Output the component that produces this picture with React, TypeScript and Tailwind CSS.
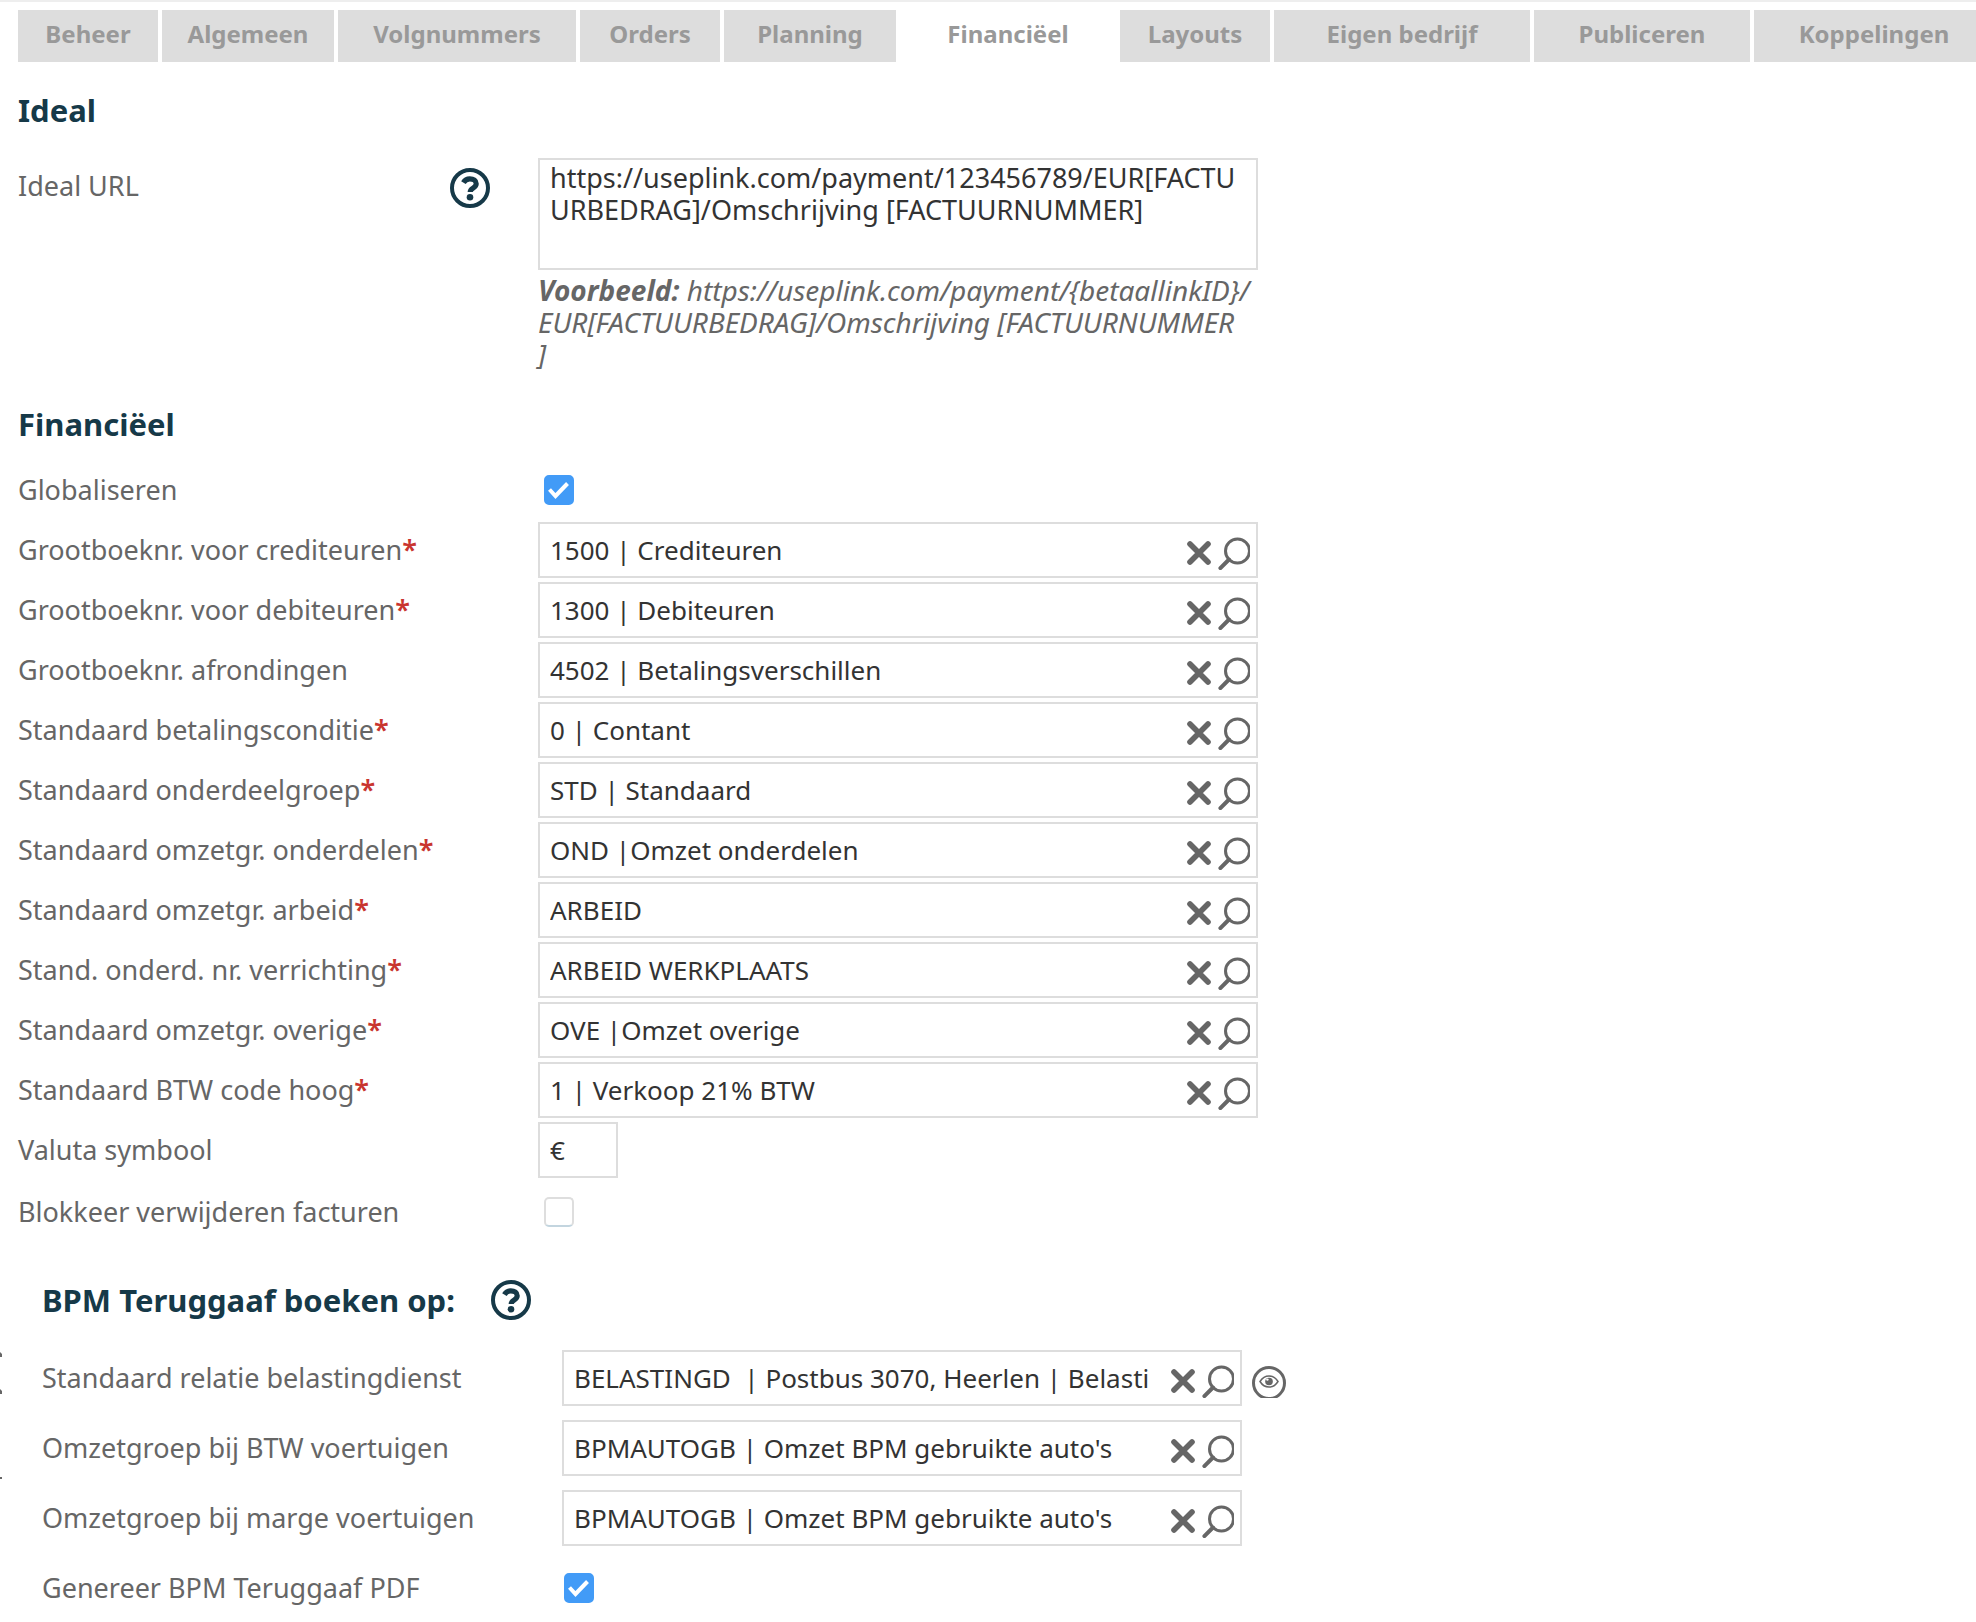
import { useId, useState, type ReactNode } from 'react';

function HelpIcon() {
  return (
    <svg viewBox="0 0 40 40" className="size-10" fill="none" stroke="currentColor" aria-hidden="true">
      <circle cx="20" cy="20" r="18" strokeWidth="4" />
      <path d="M13.4 14.6c1.5-2.6 3.6-3.8 6.4-3.8 3.8 0 6.4 1.9 6.4 4.9 0 4.6-6 4.2-6 8.3" strokeWidth="5.2" />
      <circle cx="20" cy="29.2" r="3.3" fill="currentColor" stroke="none" />
    </svg>
  );
}

function ClearIcon() {
  return (
    <svg viewBox="0 0 24 24" className="size-6" fill="none" stroke="currentColor" aria-hidden="true">
      <path d="M3 3l18 18M21 3L3 21" strokeWidth="5.6" strokeLinecap="round" />
    </svg>
  );
}

function SearchIcon() {
  return (
    <svg viewBox="0 0 32 33" className="h-[33px] w-8" fill="none" stroke="currentColor" aria-hidden="true">
      <circle cx="19.5" cy="14" r="12" strokeWidth="3" />
      <path d="M11 22.5l-8.6 8.6" strokeWidth="4" strokeLinecap="round" />
    </svg>
  );
}

function EyeIcon() {
  return (
    <svg viewBox="0 0 34 32" className="h-8 w-[34px]" fill="none" stroke="currentColor" aria-hidden="true">
      <circle cx="17" cy="17" r="15.5" strokeWidth="3" />
      <path d="M8 15.5c4.6-7.4 13.4-7.4 18 0-4.6 7.4-13.4 7.4-18 0z" strokeWidth="1.5" />
      <circle cx="17" cy="15.5" r="3.8" fill="currentColor" stroke="none" />
      <circle cx="15.4" cy="13.6" r="1.2" fill="#fff" stroke="none" />
    </svg>
  );
}

const tabs = [
  { name: 'Beheer', width: 'w-[140px]' },
  { name: 'Algemeen', width: 'w-[172px]' },
  { name: 'Volgnummers', width: 'w-[238px]' },
  { name: 'Orders', width: 'w-[140px]' },
  { name: 'Planning', width: 'w-[172px]' },
  { name: 'Financiëel', width: 'w-[216px]' },
  { name: 'Layouts', width: 'w-[150px]' },
  { name: 'Eigen bedrijf', width: 'w-[256px]' },
  { name: 'Publiceren', width: 'w-[216px]' },
  { name: 'Koppelingen', width: 'w-[240px]' },
];

const ledgerFields = [
  { label: 'Grootboeknr. voor crediteuren', required: true, value: '1500 | Crediteuren' },
  { label: 'Grootboeknr. voor debiteuren', required: true, value: '1300 | Debiteuren' },
  { label: 'Grootboeknr. afrondingen', required: false, value: '4502 | Betalingsverschillen' },
  { label: 'Standaard betalingsconditie', required: true, value: '0 | Contant' },
  { label: 'Standaard onderdeelgroep', required: true, value: 'STD | Standaard' },
  { label: 'Standaard omzetgr. onderdelen', required: true, value: 'OND |Omzet onderdelen' },
  { label: 'Standaard omzetgr. arbeid', required: true, value: 'ARBEID' },
  { label: 'Stand. onderd. nr. verrichting', required: true, value: 'ARBEID WERKPLAATS' },
  { label: 'Standaard omzetgr. overige', required: true, value: 'OVE |Omzet overige' },
  { label: 'Standaard BTW code hoog', required: true, value: '1 | Verkoop 21% BTW' },
];

function Row({ id, label, required, help, children }: { id: string; label: string; required?: boolean; help?: boolean; children: ReactNode }) {
  return (
    <div className="grid grid-cols-[520px_minmax(0,1fr)] items-start">
      <div className="flex h-14 items-center justify-between pr-12">
        <label htmlFor={id} className="whitespace-nowrap">
          {label}
          {required && <span className="font-semibold text-[#c9352f]">*</span>}
        </label>
        {help && (
          <button type="button" aria-label="Help" className="mt-1 text-[#163948]">
            <HelpIcon />
          </button>
        )}
      </div>
      {children}
    </div>
  );
}

function LookupRow({ label, required, initial, width, view }: { label: string; required?: boolean; initial: string; width: string; view?: boolean }) {
  const id = useId();
  const [value, setValue] = useState(initial);
  return (
    <Row id={id} label={label} required={required}>
      <div className="flex items-center gap-2.5">
        <div className={`flex h-14 w-full items-center border-2 border-[#dddddd] bg-white pr-1.5 pl-2.5 ${width}`}>
          <input
            id={id}
            value={value}
            onChange={(e) => setValue(e.target.value)}
            className="h-full min-w-0 flex-1 text-[26px] text-[#333333] outline-none"
          />
          <button type="button" aria-label="Wissen" onClick={() => setValue('')} className="mt-1.5 ml-1 text-[#666666]">
            <ClearIcon />
          </button>
          <button type="button" aria-label="Zoeken" className="mt-1.5 ml-[7px]">
            <SearchIcon />
          </button>
        </div>
        {view && (
          <button type="button" aria-label="Bekijken" className="mt-2">
            <EyeIcon />
          </button>
        )}
      </div>
    </Row>
  );
}

function CheckRow({ label, initial, margin }: { label: string; initial: boolean; margin: string }) {
  const id = useId();
  const [checked, setChecked] = useState(initial);
  return (
    <Row id={id} label={label}>
      <div className="flex h-14 items-center">
        <div className={`grid size-[30px] ${margin}`}>
          <input
            id={id}
            type="checkbox"
            checked={checked}
            onChange={(e) => setChecked(e.target.checked)}
            className="col-start-1 row-start-1 size-[30px] appearance-none rounded-[5px] border-2 border-[#dedede] border-b-[#c3d5df] bg-white checked:border-[#429bf7] checked:bg-[#429bf7]"
          />
          {checked && (
            <svg viewBox="0 0 30 30" className="pointer-events-none col-start-1 row-start-1 size-[30px]" fill="none" stroke="#fff" strokeWidth="4" aria-hidden="true">
              <path d="M5.5 14.5l6 6.5L23.5 8.5" />
            </svg>
          )}
        </div>
      </div>
    </Row>
  );
}

function Heading({ children }: { children: ReactNode }) {
  return <h2 className="text-[31px] leading-10 font-bold text-[#163948]">{children}</h2>;
}

export default function App() {
  const [active, setActive] = useState('Financiëel');
  const [url, setUrl] = useState('https://useplink.com/payment/123456789/EUR[FACTUURBEDRAG]/Omschrijving [FACTUURNUMMER]');
  const [currency, setCurrency] = useState('€');

  return (
    <main className="overflow-x-hidden border-t-2 border-[#eeeeee] bg-white pt-2 pl-[18px] font-['Noto_Sans',sans-serif] text-[27px] leading-8 text-[#666666]">
      <nav role="tablist" className="flex gap-1 overflow-hidden">
        {tabs.map((tab) => (
          <button
            key={tab.name}
            type="button"
            role="tab"
            aria-selected={tab.name === active}
            onClick={() => setActive(tab.name)}
            className={`h-[52px] shrink-0 pb-1 text-2xl font-bold whitespace-nowrap text-[#999999] ${tab.width} ${tab.name === active ? 'bg-white' : 'bg-[#dddddd]'}`}
          >
            {tab.name}
          </button>
        ))}
      </nav>

      <section className="mt-7">
        <Heading>Ideal</Heading>
        <div className="mt-7">
          <Row id="ideal-url" label="Ideal URL" help>
            <div className="max-w-[720px]">
              <textarea
                id="ideal-url"
                value={url}
                onChange={(e) => setUrl(e.target.value)}
                className="block h-28 w-full resize-none border-2 border-[#dddddd] px-2.5 pt-0.5 leading-8 break-all text-[#333333] outline-none"
              />
              <p className="mt-1 text-[28px] leading-8 whitespace-nowrap italic">
                <strong>Voorbeeld:</strong> https://useplink.com/payment/{'{betaallinkID}'}/<br />
                EUR[FACTUURBEDRAG]/Omschrijving [FACTUURNUMMER
                <br />]
              </p>
            </div>
          </Row>
        </div>
      </section>

      <section className="mt-[34px]">
        <Heading>Financiëel</Heading>
        <div className="mt-[18px] flex flex-col gap-1">
          <CheckRow label="Globaliseren" initial margin="ml-1.5" />
          {ledgerFields.map((f) => (
            <LookupRow key={f.label} label={f.label} required={f.required} initial={f.value} width="max-w-[720px]" />
          ))}
          <Row id="currency" label="Valuta symbool">
            <input
              id="currency"
              value={currency}
              onChange={(e) => setCurrency(e.target.value)}
              className="h-14 w-20 border-2 border-[#dddddd] px-2.5 text-[26px] text-[#333333] outline-none"
            />
          </Row>
          <div className="pt-0.5">
            <CheckRow label="Blokkeer verwijderen facturen" initial={false} margin="ml-1.5" />
          </div>
        </div>
      </section>

      <section className="relative mt-10 pl-6">
        <svg viewBox="0 0 2 130" className="absolute top-[71px] -left-[18px] h-[130px] w-0.5" fill="#666666" aria-hidden="true">
          <path d="M0 1l2 2v3H0zM0 38l2 2v3H0zM0 126h2v2H0z" />
        </svg>
        <div className="flex items-center gap-9">
          <Heading>BPM Teruggaaf boeken op:</Heading>
          <button type="button" aria-label="Help" className="text-[#163948]">
            <HelpIcon />
          </button>
        </div>
        <div className="mt-[30px] flex flex-col gap-3.5">
          <LookupRow label="Standaard relatie belastingdienst" initial={'BELASTINGD \u00a0| Postbus 3070, Heerlen | Belasti'} width="max-w-[680px]" view />
          <LookupRow label="Omzetgroep bij BTW voertuigen" initial="BPMAUTOGB | Omzet BPM gebruikte auto's" width="max-w-[680px]" />
          <LookupRow label="Omzetgroep bij marge voertuigen" initial="BPMAUTOGB | Omzet BPM gebruikte auto's" width="max-w-[680px]" />
          <CheckRow label="Genereer BPM Teruggaaf PDF" initial margin="ml-0.5" />
        </div>
      </section>
    </main>
  );
}
